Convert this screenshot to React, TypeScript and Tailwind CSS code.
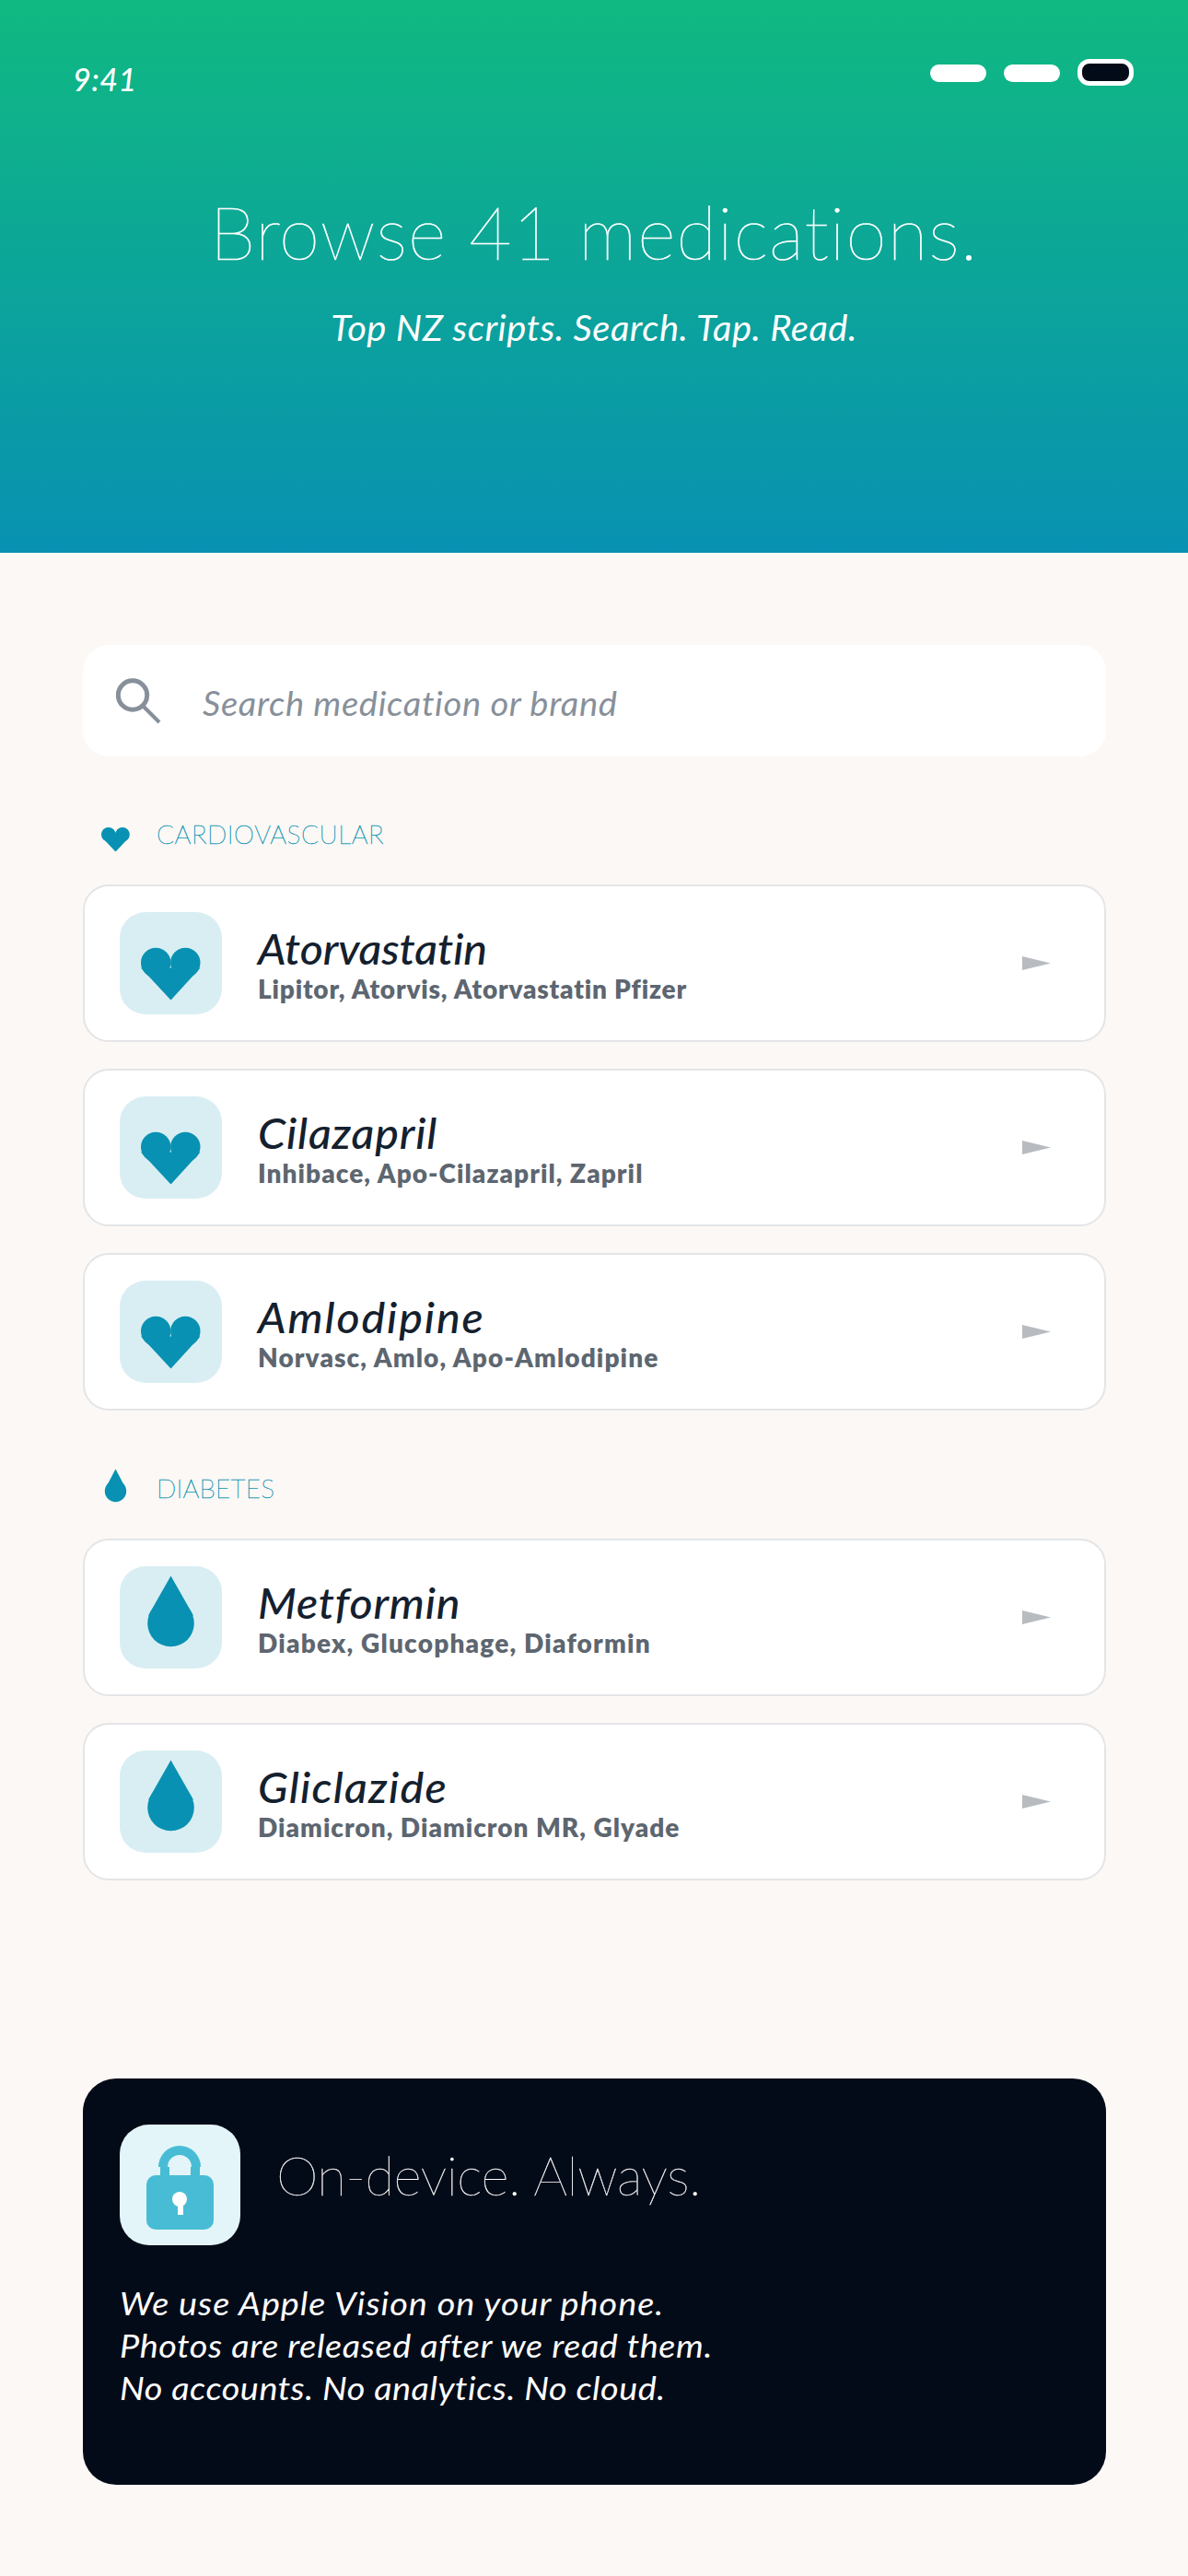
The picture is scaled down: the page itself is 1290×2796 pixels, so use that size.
const sections = [
  {
    title: "CARDIOVASCULAR",
    icon: "heart",
    titleClass: "tracking-[0.5px]",
    items: [
      {
        name: "Atorvastatin",
        nameClass: "tracking-[-0.1px]",
        brands: "Lipitor, Atorvis, Atorvastatin Pfizer",
        brandsClass: "tracking-[0.8px]",
      },
      {
        name: "Cilazapril",
        nameClass: "tracking-[0.8px]",
        brands: "Inhibace, Apo-Cilazapril, Zapril",
        brandsClass: "tracking-[1.05px]",
      },
      {
        name: "Amlodipine",
        nameClass: "tracking-[1.8px]",
        brands: "Norvasc, Amlo, Apo-Amlodipine",
        brandsClass: "tracking-[1.1px]",
      },
    ],
  },
  {
    title: "DIABETES",
    icon: "drop",
    titleClass: "tracking-[0.2px]",
    items: [
      {
        name: "Metformin",
        nameClass: "tracking-[0.75px]",
        brands: "Diabex, Glucophage, Diaformin",
        brandsClass: "tracking-[1.2px]",
      },
      {
        name: "Gliclazide",
        nameClass: "tracking-[1.2px]",
        brands: "Diamicron, Diamicron MR, Glyade",
        brandsClass: "tracking-[1px]",
      },
    ],
  },
];

type Medication = (typeof sections)[number]["items"][number];

const SectionIcon = ({ icon }: { icon: string }) => (
  <svg className="h-10 w-[31px] fill-[#0891b2]" viewBox="0 0 31 40">
    {icon === "heart" ? (
      <>
        <circle cx="7.8" cy="21.8" r="7.8" />
        <circle cx="23" cy="21.8" r="7.8" />
        <path d="M0.5 24.5H30.5L15.5 40.5Z" />
        <path d="M8 20H23V26H8Z" />
      </>
    ) : (
      <>
        <circle cx="15.5" cy="24.5" r="11.7" />
        <path d="M15.5 0.5L26 20.5H5Z" />
      </>
    )}
  </svg>
);

const TileIcon = ({ icon }: { icon: string }) => (
  <div className="size-[111px] shrink-0 rounded-[28px] bg-[#d9eef3]">
    <svg className="size-full fill-[#0891b2]" viewBox="0 0 111 111">
      {icon === "heart" ? (
        <>
          <circle cx="39.2" cy="55" r="16.2" />
          <circle cx="71.3" cy="55" r="16.2" />
          <path d="M23 60.5H87.5L55.5 95.5Z" />
        </>
      ) : (
        <>
          <circle cx="55.5" cy="62" r="25.3" />
          <path d="M55.5 10.5L80 53.5H31Z" />
        </>
      )}
    </svg>
  </div>
);

const MedicationCard = ({ item, icon }: { item: Medication; icon: string }) => (
  <div className="flex h-[171px] items-center rounded-[28px] border-2 border-[#e4e5e7] bg-white pr-[58px] pl-[38px]">
    <TileIcon icon={icon} />
    <div className="ml-[39px] flex-1 pt-[3px]">
      <h3
        className={`origin-left scale-x-[1.05] text-[46px] leading-[52px] font-medium text-[#14202e] italic [font-variant-ligatures:none] ${item.nameClass}`}
      >
        {item.name}
      </h3>
      <p className={`text-[28px] leading-[34px] font-extrabold text-[#5d6670] ${item.brandsClass}`}>
        {item.brands}
      </p>
    </div>
    <svg className="h-[15px] w-[31px] fill-[#b8bcc0]" viewBox="0 0 31 15">
      <path d="M0 0L31 7.5L0 15Z" />
    </svg>
  </div>
);

export default function App() {
  return (
    <div className="min-h-[2796px] w-[1290px] bg-[#fcf8f5] font-['Lato',sans-serif]">
      <header className="h-[600px] bg-linear-to-b/srgb from-[#10b981] to-[#0891b2] pt-16 text-white">
        <div className="flex h-10 items-start justify-between pr-[59px] pl-[79px]">
          <span className="text-[34px] leading-[43px] font-medium tracking-[0.5px] italic">9:41</span>
          <div className="flex gap-[19px]">
            <div className="mt-[6px] h-[19px] w-[61px] rounded-full bg-white" />
            <div className="mt-[6px] h-[19px] w-[61px] rounded-full bg-white" />
            <div className="h-[29px] w-[61px] rounded-[13px] border-5 border-white bg-[#040b18]" />
          </div>
        </div>
        <h1 className="mt-[99px] text-center text-[80px] leading-[96px] font-thin tracking-[1.05px] [-webkit-text-stroke:0.7px_white]">
          Browse 41 medications.
        </h1>
        <p className="mt-[33px] scale-x-[1.05] text-center text-[38px] leading-[46px] tracking-[0.5px] italic">
          Top NZ scripts. Search. Tap. Read.
        </p>
      </header>

      <main className="pt-[100px] pr-[89px] pl-[90px]">
        <div className="flex h-[121px] items-center rounded-[28px] bg-white pl-9">
          <svg className="h-[50px] w-[50px] fill-none stroke-[#87909a]" viewBox="0 0 50 50">
            <circle cx="18" cy="18.5" r="15.7" strokeWidth="5" />
            <path d="M29 30L47 48" strokeWidth="4" />
          </svg>
          <span className="ml-[44px] origin-left scale-x-[1.06] pt-[4px] text-[36px] leading-[44px] tracking-[0.6px] text-[#87909a] italic">
            Search medication or brand
          </span>
        </div>

        {sections.map((section) => (
          <section key={section.title} className="mt-[63px]">
            <div className="mb-9 flex h-10 items-end pl-5">
              <SectionIcon icon={section.icon} />
              <h2
                className={`ml-[29px] pb-px text-[28px] leading-9 font-thin text-[#0891b2] [-webkit-text-stroke:0.4px_#0891b2] ${section.titleClass}`}
              >
                {section.title}
              </h2>
            </div>
            <div className="flex flex-col gap-[29px]">
              {section.items.map((item) => (
                <MedicationCard key={item.name} item={item} icon={section.icon} />
              ))}
            </div>
          </section>
        ))}

        <section className="mt-[215px] h-[441px] rounded-[36px] bg-[#040b18] px-10 pt-[50px] text-white">
          <div className="flex">
            <svg className="size-[131px] rounded-[32px] bg-[#e3f5f8]" viewBox="0 0 131 131">
              <path
                d="M42 46A23 23 0 0 1 88 46H87V56H77V46H78A13 13 0 0 0 52 46H54V56H44V46Z"
                fill="#48bcd5"
              />
              <rect x="29" y="55" width="73" height="59" rx="10" fill="#48bcd5" />
              <circle cx="65" cy="81" r="8" fill="white" />
              <path d="M63 81H69V98H63Z" fill="white" />
            </svg>
            <h2 className="mt-[20px] ml-[39px] text-[58px] leading-[70px] font-thin tracking-[-0.4px] [-webkit-text-stroke:0.3px_white]">
              On-device. Always.
            </h2>
          </div>
          <div className="mt-[39px] origin-left scale-x-[1.08] text-[35px] leading-[46px] italic">
            <p className="tracking-[0.92px]">We use Apple Vision on your phone.</p>
            <p className="tracking-[0.59px]">Photos are released after we read them.</p>
            <p className="tracking-[0.47px]">No accounts. No analytics. No cloud.</p>
          </div>
        </section>
      </main>
    </div>
  );
}
